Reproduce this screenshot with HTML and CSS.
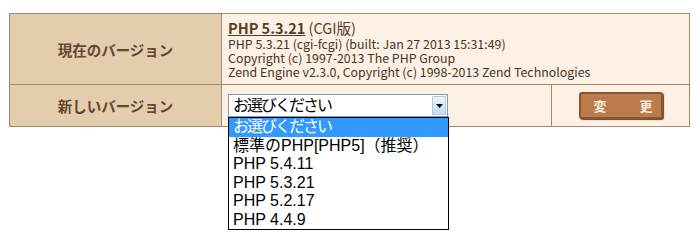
FILE: index.html
```html
<!DOCTYPE html>
<html lang="ja">
<head>
<meta charset="utf-8">
<link rel="stylesheet" href="styles.css">
</head>
<body>
<div class="page">
<table class="ver">
  <tr class="row-cur">
    <th class="label">現在のバージョン</th>
    <td class="info" colspan="2">
      <div class="title"><a class="ver-link" href="#">PHP 5.3.21</a> (CGI版)</div>
      <div class="detail">PHP 5.3.21 (cgi-fcgi) (built: Jan 27 2013 15:31:49)</div>
      <div class="detail">Copyright (c) 1997-2013 The PHP Group</div>
      <div class="detail">Zend Engine v2.3.0, Copyright (c) 1998-2013 Zend Technologies</div>
    </td>
  </tr>
  <tr class="row-new">
    <th class="label">新しいバージョン</th>
    <td class="sel-cell">
      <div class="select">
        <span class="select-text"><span class="ja">お選びください</span></span>
        <span class="select-arrow"><svg width="7" height="4" viewBox="0 0 7 4"><path d="M0 0h7L3.5 4z" fill="#000"/></svg></span>
      </div>
    </td>
    <td class="btn-cell"><button class="btn">変　更</button></td>
  </tr>
</table>
<ul class="options">
  <li class="opt active"><span class="ja">お選びください</span></li>
  <li class="opt">標準のPHP[PHP5]（推奨）</li>
  <li class="opt">PHP 5.4.11</li>
  <li class="opt">PHP 5.3.21</li>
  <li class="opt">PHP 5.2.17</li>
  <li class="opt">PHP 4.4.9</li>
</ul>
</div>
</body>
</html>
```
FILE: styles.css
```css
html, body { margin: 0; padding: 0; background: #fff; }
body { font-family: "Noto Sans CJK JP", "Liberation Sans", sans-serif; }
.page { position: relative; padding: 13px 0 0 9px; min-height: 241px; box-sizing: border-box; }
.ver {
  border-collapse: collapse;
  width: 681px;
  border: 1px solid #a8866a;
}
.ver th, .ver td { border: 1px solid #a8866a; padding: 0; }
.label {
  width: 211px;
  background: #e4cdac;
  color: #654630;
  font-size: 14.5px;
  font-weight: bold;
  text-align: center;
}
.row-cur { height: 71px; }
.row-new { height: 42px; }
.info {
  background: #fdf0e4;
  padding: 0 6px !important;
  vertical-align: top;
  color: #3a2a1e;
}
.title { font-size: 14.5px; line-height: 16px; margin-top: 6px; margin-bottom: 1px; color: #5a3c26; }
.ver-link { color: #5a3c26; font-weight: bold; text-decoration: underline; }
.detail { font-size: 12.4px; line-height: 14px; color: #4a3424; white-space: nowrap; }
.sel-cell { width: 323px; background: #fdf0e4; padding-left: 6px !important; }
.select {
  width: 220px;
  height: 23px;
  border: 1px solid #7f9db9;
  background: #fff;
  box-sizing: border-box;
  display: flex;
  align-items: center;
  font-family: "Liberation Sans", "Noto Sans CJK JP", sans-serif;
  font-size: 16px;
}
.ja { letter-spacing: -2px; }
.select-text { flex: 1; padding-left: 4px; color: #000; line-height: 20px; }
.select-arrow {
  width: 14px;
  height: 19px;
  margin-right: 1px;
  background: linear-gradient(#eaf3fd, #c2daf3);
  border: 1px solid #b4cde6;
  box-sizing: border-box;
  display: flex;
  align-items: center;
  justify-content: center;
}
.options {
  position: absolute;
  left: 228px;
  top: 117px;
  z-index: 10;
  width: 221px;
  box-sizing: border-box;
  margin: 0;
  padding: 0;
  list-style: none;
  background: #fff;
  border: 1px solid #000;
  font-family: "Liberation Sans", "Noto Sans CJK JP", sans-serif;
}
.opt { height: 18.5px; line-height: 18.5px; padding-left: 4px; color: #000; font-size: 16px; white-space: nowrap; }
.opt.active { background: #3399ff; color: #fff; }
.btn-cell { background: #fdf0e4; text-align: center; }
.btn {
  width: 84px;
  height: 27px;
  background: #bb7b4c;
  border: 2px solid #8a5530;
  border-radius: 3px;
  color: #f6eadc;
  font-family: "Noto Sans CJK JP", sans-serif;
  font-size: 13px;
  font-weight: bold;
  letter-spacing: 10px;
  padding: 0 0 0 13px;
  white-space: nowrap;
  box-shadow: 1px 1px 1px #6d4022;
}
```
